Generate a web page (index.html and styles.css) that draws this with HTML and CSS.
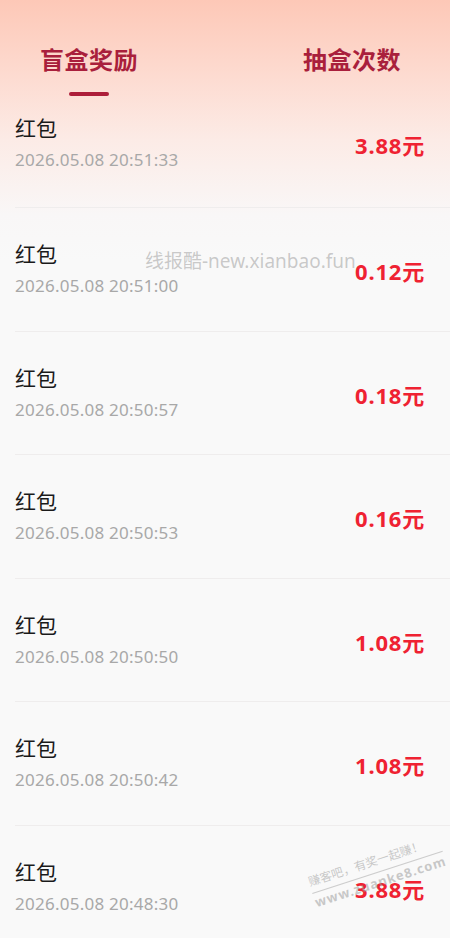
FILE: index.html
```html
<!DOCTYPE html>
<html lang="zh-CN">
<head>
    <meta charset="UTF-8">
    <meta name="viewport" content="width=device-width, initial-scale=1.0">
    <title>盲盒奖励</title>
    <link rel="stylesheet" href="styles.css">
</head>
<body>

    <div class="tabs">
        <div class="tab active">
            <span>盲盒奖励</span>
            <i class="indicator"></i>
        </div>
        <div class="tab">
            <span>抽盒次数</span>
        </div>
    </div>

    <div class="list">
        <div class="row">
            <div class="info">
                <div class="title">红包</div>
                <div class="time">2026.05.08&nbsp;20:51:33</div>
            </div>
            <div class="amount">3.88元</div>
        </div>
        <div class="row">
            <div class="info">
                <div class="title">红包</div>
                <div class="time">2026.05.08&nbsp;20:51:00</div>
            </div>
            <div class="amount">0.12元</div>
        </div>
        <div class="row">
            <div class="info">
                <div class="title">红包</div>
                <div class="time">2026.05.08&nbsp;20:50:57</div>
            </div>
            <div class="amount">0.18元</div>
        </div>
        <div class="row">
            <div class="info">
                <div class="title">红包</div>
                <div class="time">2026.05.08&nbsp;20:50:53</div>
            </div>
            <div class="amount">0.16元</div>
        </div>
        <div class="row">
            <div class="info">
                <div class="title">红包</div>
                <div class="time">2026.05.08&nbsp;20:50:50</div>
            </div>
            <div class="amount">1.08元</div>
        </div>
        <div class="row">
            <div class="info">
                <div class="title">红包</div>
                <div class="time">2026.05.08&nbsp;20:50:42</div>
            </div>
            <div class="amount">1.08元</div>
        </div>
        <div class="row">
            <div class="info">
                <div class="title">红包</div>
                <div class="time">2026.05.08&nbsp;20:48:30</div>
            </div>
            <div class="amount">3.88元</div>
        </div>
    </div>

    <!-- watermarks sitting on top of the screenshot -->
    <div class="mark-top">线报酷-new.xianbao.fun</div>
    <div class="mark-stamp">
        <div>赚客吧，有奖一起赚！</div>
        <div class="stamp-url">www.zuanke8.com</div>
    </div>

</body>
</html>
```

FILE: styles.css
```css
body {
    margin: 0;
    min-height: 938px;
    font-family: "Noto Sans", "Noto Sans CJK SC", sans-serif;
    background: linear-gradient(180deg, #fdc8b7 0px, #fddcd2 80px, #fcebe6 140px, #f9f7f7 215px, #f9f9f9 260px);
    background-color: #f9f9f9;
    position: relative;
    overflow: hidden;
}
.tabs {
    display: flex;
    justify-content: space-between;
    padding: 46px 49px 0 40px;
    height: 50px;
}
.tab {
    display: flex;
    flex-direction: column;
    align-items: center;
}
.tab span {
    font-size: 24px;
    line-height: 28px;
    font-weight: 700;
    color: #a91f3c;
    letter-spacing: 0.5px;
}
.indicator {
    display: block;
    width: 40px;
    height: 4px;
    margin-top: 18px;
    border-radius: 2px;
    background: #ad1e3a;
}
.row {
    box-sizing: border-box;
    height: 123.6px;
    margin-left: 15px;
    padding: 32px 26px 0 0;
    border-top: 1px solid #efeded;
    display: flex;
    align-items: flex-start;
    justify-content: space-between;
}
.row:first-child {
    height: 111px;
    padding-top: 18px;
    border-top: none;
}
.info {
    display: flex;
    flex-direction: column;
}
.title {
    font-size: 21px;
    line-height: 28px;
    color: #1a1a1a;
}
.time {
    margin-top: 6px;
    font-size: 17px;
    line-height: 24px;
    letter-spacing: 0.25px;
    color: #a8a8a8;
}
.amount {
    align-self: flex-start;
    margin-top: 17px;
    margin-right: -1px;
    font-size: 22px;
    line-height: 28px;
    font-weight: 700;
    letter-spacing: 0.8px;
    color: #ef2232;
}
.mark-top {
    position: absolute;
    left: 145px;
    top: 248px;
    font-size: 19px;
    line-height: 26px;
    color: rgba(140, 140, 140, 0.45);
    white-space: nowrap;
}
.mark-stamp {
    position: absolute;
    left: 306px;
    top: 874px;
    font-size: 12px;
    line-height: 18px;
    color: rgba(150, 150, 150, 0.5);
    transform: rotate(-18deg);
    transform-origin: left top;
    white-space: nowrap;
}
.stamp-url {
    margin-top: 2px;
    border-top: 1px solid rgba(160, 160, 160, 0.5);
    font-size: 13px;
    letter-spacing: 1px;
    font-weight: 700;
}
```
